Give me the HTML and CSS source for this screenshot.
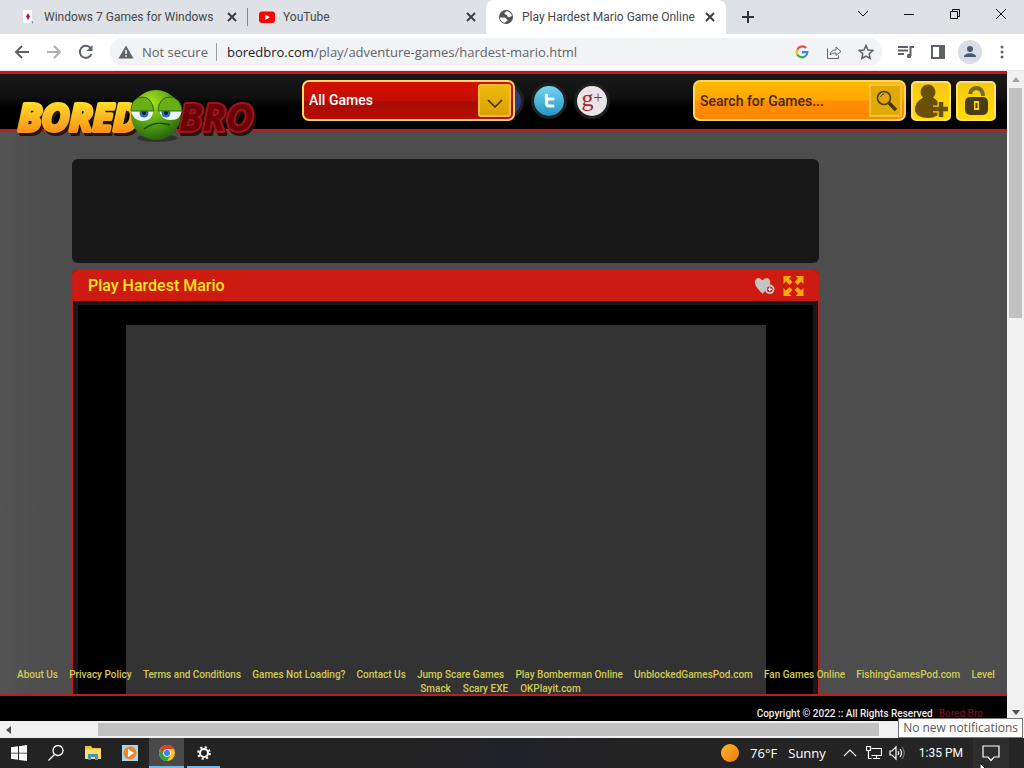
FILE: index.html
```html
<!DOCTYPE html>
<html lang="en">
<head>
<meta charset="utf-8">
<title>Play Hardest Mario Game Online</title>
<link rel="stylesheet" href="styles.css">
</head>
<body>
<div class="tabs">
  <div class="tab tab-first">
    <svg class="fav" viewBox="0 0 16 16"><rect x="3" y="1" width="9" height="13" rx="1" fill="#fff"/><path d="M8 4l2 3.500-2 3.500-2-3.500z" fill="#c8102e"/><path d="M11 13l2-1v3z" fill="#889"/></svg>
    <span class="tab-title">Windows 7 Games for Windows</span>
    <button class="close" aria-label="Close tab"><svg viewBox="0 0 10 10"><path d="M1 1l8 8M9 1l-8 8"/></svg></button>
  </div>
  <div class="tab tab-second">
    <svg class="fav" viewBox="0 0 16 16"><rect y="2.500" width="16" height="11.500" rx="3" fill="#f00"/><path d="M6.300 5.500v5.500l4.700-2.750z" fill="#fff"/></svg>
    <span class="tab-title">YouTube</span>
    <button class="close" aria-label="Close tab"><svg viewBox="0 0 10 10"><path d="M1 1l8 8M9 1l-8 8"/></svg></button>
  </div>
  <div class="tab active">
    <svg class="fav" viewBox="0 0 16 16"><circle cx="8" cy="8" r="7" fill="#505357"/><path d="M2 8.500h4.500c1.500 0 1.500 2 3 2v1.300c-1.500 0-1.500 2-3.500 2C3.500 13 2 11 2 8.500zM8.500 2.200c-1 1-2 1-2 2.300 0 1.500 1.800.8 2.500 1.800s.5 2 2 2 1.500-1.300 3-1.300C13.500 4.500 11.500 2.300 8.500 2.200z" fill="#fff"/></svg>
    <span class="tab-title">Play Hardest Mario Game Online</span>
    <button class="close" aria-label="Close tab"><svg viewBox="0 0 10 10"><path d="M1 1l8 8M9 1l-8 8"/></svg></button>
  </div>
  <button class="new-tab" aria-label="New tab"><svg viewBox="0 0 14 14"><path d="M7 1v12M1 7h12"/></svg></button>
  <div class="window-buttons">
    <button aria-label="Search tabs"><svg viewBox="0 0 12 12"><path d="M1 3l5 5 5-5"/></svg></button>
    <button aria-label="Minimize"><svg viewBox="0 0 12 12"><path d="M1 6.500h10"/></svg></button>
    <button aria-label="Restore"><svg viewBox="0 0 12 12"><path d="M1.500 3.500h7v7h-7zM3.500 3.500v-2h7v7h-2"/></svg></button>
    <button aria-label="Close"><svg viewBox="0 0 12 12"><path d="M1 1l10 10M11 1L1 11"/></svg></button>
  </div>
</div>

<div class="toolbar">
  <div class="nav">
    <button aria-label="Back"><svg viewBox="0 0 16 16"><path d="M15 8H2M8 2L2 8l6 6"/></svg></button>
    <button class="dim" aria-label="Forward"><svg viewBox="0 0 16 16"><path d="M1 8h13M8 2l6 6-6 6"/></svg></button>
    <button aria-label="Reload"><svg viewBox="0 0 16 16"><path d="M13.500 10A6 6 0 1 1 12.500 4"/><path d="M14.500 1v6h-6z" fill="#5f6368" stroke="none"/></svg></button>
  </div>
  <div class="address">
    <svg class="warn" viewBox="0 0 16 16"><path d="M8 1.500l7.500 13H.5z" fill="#5f6368"/><path d="M8 6v4M8 11.200v1.600" stroke="#fff" stroke-width="1.500"/></svg>
    <span class="secure">Not secure</span>
    <span class="url"><b>boredbro.com</b>/play/adventure-games/hardest-mario.html</span>
    <button aria-label="Google"><svg class="google" viewBox="0 0 16 16" fill="none"><path d="M12 4A5.300 5.300 0 0 0 3.300 5.600" stroke="#ea4335"/><path d="M3.300 5.600a5.300 5.300 0 0 0 0 4.800" stroke="#fbbc05"/><path d="M3.300 10.400a5.300 5.300 0 0 0 8.200 1.600" stroke="#34a853"/><path d="M11.500 12a5.300 5.300 0 0 0 1.800-3.800H8" stroke="#4285f4"/></svg></button>
    <button aria-label="Share"><svg viewBox="0 0 16 16"><path class="thin" d="M1.500 4.500v10h11v-3M4 11c.5-3.500 2.500-5 6-5V3l5 4.500-5 4V9c-3 0-4.500.5-6 2z"/></svg></button>
    <button aria-label="Bookmark"><svg viewBox="0 0 16 16"><path class="star" d="M8 1.500l2 4.500 4.800.5-3.600 3.200 1 4.800L8 12l-4.200 2.500 1-4.800L1.200 6.500 6 6z"/></svg></button>
  </div>
  <div class="tools">
    <button aria-label="Media"><svg viewBox="0 0 16 16"><path d="M0 3h10M0 6.500h10M0 10h6M12.500 12V3H16"/><circle cx="11" cy="12" r="2.200" fill="#5f6368" stroke="none"/></svg></button>
    <button aria-label="Side panel"><svg viewBox="0 0 16 16"><path d="M2 2h12v12H2z"/><path d="M10 2h4v12h-4z" fill="#5f6368"/></svg></button>
    <button class="profile" aria-label="Profile"><svg viewBox="0 0 16 16"><g fill="#4b5870" stroke="none"><circle cx="8" cy="5" r="3"/><path d="M2 13c0-5 12-5 12 0z"/></g></svg></button>
    <button aria-label="Menu"><svg viewBox="0 0 16 16"><g fill="#5f6368" stroke="none"><circle cx="8" cy="3" r="1.500"/><circle cx="8" cy="8" r="1.500"/><circle cx="8" cy="13" r="1.500"/></g></svg></button>
  </div>
</div>

<div class="view">
  <div class="page">
    <header class="site-header">
      <a class="logo" href="#" aria-label="Bored Bro">
        <svg viewBox="0 0 244 60">
          <defs>
            <linearGradient id="gold" x2="0" y2="1"><stop offset=".2" stop-color="#ffe32a"/><stop offset=".85" stop-color="#fb8d16"/></linearGradient>
            <radialGradient id="green" cx=".4" cy=".25" r=".8"><stop stop-color="#a9e51b"/><stop offset=".5" stop-color="#5ca716"/><stop offset="1" stop-color="#205f0b"/></radialGradient>
          </defs>
          <g class="logo-text">
            <text class="bored" x="4" y="45">BORED</text><text class="bro" x="165" y="45">BRO</text>
          </g>
          <ellipse cx="143" cy="52" rx="20" ry="4" fill="#222" opacity=".6"/>
          <circle cx="142" cy="29" r="25" fill="url(#green)"/>
          <path d="M117 24h22q0 11-11 11-10-1-11-11z" fill="#eef7fb"/><path d="M145 24h23q-1 10-11 10-10 0-12-10z" fill="#eef7fb"/>
          <circle cx="130" cy="27" r="4.500" fill="#2873b4"/><circle cx="152" cy="27" r="4.500" fill="#2873b4"/>
          <circle cx="130" cy="27" r="2" fill="#071b30"/><circle cx="152" cy="27" r="2" fill="#071b30"/>
          <path d="M117 25q0-13 11-14 10 0 12 14zM144 25q1-14 12-14 11 1 12 14z" fill="#6bad16" stroke="#2c6c0c"/>
          <path d="M130 43q12-9 26-4" fill="none" stroke="#1e4a08" stroke-width="1.500"/>
        </svg>
      </a>
      <div class="category">
        <select aria-label="Category"><option>All Games</option></select>
        <span class="arrow"><svg viewBox="0 0 16 10"><path d="M1 1l7 7 7-7"/></svg></span>
      </div>
      <div class="social">
        <a class="facebook" href="#" aria-label="Facebook"></a>
        <a class="twitter" href="#" aria-label="Twitter"><svg viewBox="0 0 16 16"><path d="M5.500 2v8q0 3 3 3H12M5.500 6H12" fill="none" stroke="#fff" stroke-width="3.200" stroke-linecap="round"/></svg></a>
        <a class="gplus" href="#" aria-label="Google Plus">g<sup>+</sup></a>
      </div>
      <form class="search">
        <input type="text" value="Search for Games..." aria-label="Search for games">
        <button type="button" aria-label="Search"><svg viewBox="0 0 24 24"><circle cx="10" cy="9" r="6.500" fill="none" stroke="#493708" stroke-width="1.600"/><path d="M6.500 8q1-3 4-3" stroke="#493708" fill="none"/><path d="M15 14l7 7" stroke="#493708" stroke-width="3.500"/></svg></button>
      </form>
      <button class="square" aria-label="Register"><svg viewBox="0 0 36 36"><g fill="#6a5006"><circle cx="15" cy="9" r="7.500"/><path d="M11 14h8q9 4 8 13-1 8-12 8T2 28q-1-9 9-14z"/></g><path d="M28 18v17M20 26h16" stroke="#fbd40a" stroke-width="7"/><path d="M28 19v15M20 26h15" stroke="#6a5006" stroke-width="4.500"/></svg></button>
      <button class="square" aria-label="Log in"><svg viewBox="0 0 36 36"><path d="M12 11q1-6 7-6 6 1 6 8" fill="none" stroke="#756a25" stroke-width="4"/><rect x="7" y="14" width="23" height="18" rx="5" fill="#4a3c1a"/><path d="M18.500 18v9" stroke="#fbd40a" stroke-width="5"/><path d="M18.500 20v5" stroke="#4a3c1a" stroke-width="2"/></svg></button>
    </header>
    <main>
      <div class="ad"></div>
      <section class="game">
        <div class="game-head">
          <h1>Play Hardest Mario</h1>
          <button aria-label="Add to favourites"><svg viewBox="0 0 22 20"><path d="M9 18Q0 10 1 5q2-6 8-1 6-5 8 1 1 5-8 13z" fill="#c5c2c2"/><circle cx="16.500" cy="13.500" r="4" fill="#b3292b" stroke="#c5c2c2" stroke-width="2"/><path d="M16.500 11.500v4M14.500 13.500h4" stroke="#fff" stroke-width="1.500"/></svg></button>
          <button aria-label="Full screen"><svg viewBox="0 0 20 20"><path d="M0 0h8L5.500 2.500l3.500 3.500L6 9 2.500 5.500 0 8zM20 0v8l-2.500-2.500L14 9l-3-3 3.500-3.500L12 0zM0 20v-8l2.500 2.500L6 11l3 3-3.500 3.500L8 20zM20 20h-8l2.500-2.500L11 14l3-3 3.500 3.500L20 12z" fill="#fba80e"/></svg></button>
        </div>
        <div class="game-body"><div class="game-frame"></div></div>
      </section>
    </main>
    <footer>
      <nav class="links">
        <div><a href="#">About Us</a><a href="#">Privacy Policy</a><a href="#">Terms and Conditions</a><a href="#">Games Not Loading?</a><a href="#">Contact Us</a><a href="#">Jump Scare Games</a><a href="#">Play Bomberman Online</a><a href="#">UnblockedGamesPod.com</a><a href="#">Fan Games Online</a><a href="#">FishingGamesPod.com</a><a href="#">Level</a></div>
        <div class="second"><a href="#">Smack</a><a href="#">Scary EXE</a><a href="#">OKPlayit.com</a></div>
      </nav>
      <div class="copyright"><span>Copyright © 2022 :: All Rights Reserved</span><a href="#">Bored Bro</a></div>
    </footer>
  </div>
  <div class="vscroll">
    <svg viewBox="0 0 8 5"><path d="M4 0l4 5H0z" fill="#a3a3a3"/></svg>
    <div class="vthumb"></div>
    <svg viewBox="0 0 8 5"><path d="M4 5l4-5H0z" fill="#505050"/></svg>
  </div>
</div>
<div class="hscroll">
  <svg viewBox="0 0 5 8"><path d="M0 4l5-4v8z" fill="#505050"/></svg>
  <div class="hthumb"></div>
</div>

<div class="taskbar">
  <button aria-label="Start"><svg viewBox="0 0 16 16"><path d="M0 2.300l7-1v6.400H0zM8 1.200L16 0v7.700H8zM0 8.500h7v6.300l-7-1zM8 8.500h8V16l-8-1.100z" fill="#fff"/></svg></button>
  <button aria-label="Search"><svg viewBox="0 0 16 16" fill="none" stroke="#fff" stroke-width="1.300"><circle cx="10" cy="5.500" r="5"/><path d="M6.500 9.500L.5 15.500"/></svg></button>
  <button aria-label="File Explorer"><svg viewBox="0 0 16 16"><path d="M0 1h6l1.500 2H16v11H0z" fill="#efc042"/><path d="M0 4.500h16V14H0z" fill="#fbdc73"/><path d="M3 15V9h10v6h-3v-3H6v3z" fill="#4492c4"/></svg></button>
  <button aria-label="Media Player"><svg viewBox="0 0 16 16"><path d="M0 0h16v16H0z" fill="#a8d5ee"/><circle cx="8" cy="8" r="6.500" fill="#f08422"/><path d="M6 4l6 4-6 4z" fill="#fff"/></svg></button>
  <button class="running current" aria-label="Chrome"><svg viewBox="0 0 16 16"><circle cx="8" cy="8" r="8" fill="#f7c71e"/><path d="M1.100 4A8 8 0 0 1 15 4H8v4L4.500 10z" fill="#e33b2e"/><path d="M1.100 4A8 8 0 0 0 8 16l3.500-6L8 12 4.500 10z" fill="#2da14c"/><circle cx="8" cy="8" r="3.800" fill="#fff"/><circle cx="8" cy="8" r="3" fill="#3f7fe8"/></svg></button>
  <button class="running" aria-label="Settings"><svg viewBox="0 0 16 16" fill="none" stroke="#fff"><circle cx="8" cy="8" r="4" stroke-width="2"/><circle cx="8" cy="8" r="5.800" stroke-width="2" stroke-dasharray="2.200 2.355"/></svg></button>
  <div class="tray">
    <span class="sun"></span><span class="weather">76°F</span><span class="weather">Sunny</span>
    <svg class="chevron" viewBox="0 0 14 14"><path d="M1 10l6-6 6 6"/></svg>
    <svg viewBox="0 0 16 16"><path d="M5.500 3.500h10v7h-10M10.500 10.500v3M7 13.500h7M.5 1.500h4v4h-4zM2.500 5.500v8h3"/></svg>
    <svg class="sound" viewBox="0 0 16 16"><path d="M1 6h2l4-4v12l-4-4H1zM9 6q1.500 2 0 4M11 4q3 4 0 8"/><path d="M13 2q4.500 6 0 12" stroke="#777"/></svg>
    <span class="clock">1:35 PM</span>
    <button class="notify" aria-label="Notifications"><svg viewBox="0 0 18 18"><path d="M1 2h16v11h-5l-3 3.500L6 13H1z"/></svg></button>
  </div>
</div>
<div class="tooltip">No new notifications</div>
<svg class="cursor" viewBox="0 0 8 12"><path d="M0 0v11l3-3h5z" fill="#fff" stroke="#000"/></svg>
</body>
</html>
```
FILE: styles.css
```css
* { box-sizing: border-box; }
body { margin: 0; height: 100vh; display: flex; flex-direction: column; position: relative; overflow: hidden; font-family: "Open Sans", "Noto Sans", sans-serif; font-size: 12px; color: #45484c; background: #222; }
button { border: 0; padding: 0; background: none; display: flex; align-items: center; justify-content: center; font: inherit; color: inherit; }
a { text-decoration: none; }
svg { display: block; flex: none; }

.tabs { flex: none; height: 34px; display: flex; background: #dee1e6; font-family: Roboto, sans-serif; }
.tab { flex: 0 1 240px; min-width: 0; display: flex; align-items: center; gap: 8px; padding: 0 9px 0 11px; }
.tab-first { flex-basis: 247px; padding: 0 8px 0 20px; }
.tab-second { flex-basis: 239px; padding: 0 8px 0 12px; background: linear-gradient(#85888c, #85888c) left center / 1px 18px no-repeat; }
.tab.active { background: #fff; border-radius: 8px 8px 0 0; padding-left: 12px; }
.tab-title { flex: 1; white-space: nowrap; overflow: hidden; }
.fav { width: 16px; height: 16px; }
.close svg { width: 10px; height: 10px; stroke: #3c4043; stroke-width: 2; }
.close { width: 14px; height: 14px; }
.new-tab { width: 44px; }
.new-tab svg { width: 14px; height: 14px; stroke: #303336; stroke-width: 2; }
.window-buttons { margin-left: auto; display: flex; }
.window-buttons button { width: 46px; height: 28px; }
.window-buttons svg { width: 12px; height: 12px; fill: none; stroke: #111; }

.toolbar { flex: none; height: 37px; display: flex; align-items: center; gap: 8px; padding: 0 6px; background: #fff; border-bottom: 1px solid #e8e2dc; }
.toolbar svg { width: 16px; height: 16px; fill: none; stroke: #5f6368; stroke-width: 2; }
.toolbar button { width: 32px; height: 28px; }
.toolbar .dim { opacity: .5; }
.toolbar .thin { stroke-width: 1; }
.toolbar .star { stroke-width: 1.500; }
.nav { display: flex; }
.address { flex: 1; min-width: 0; height: 28px; display: flex; align-items: center; background: #f1f3f4; border-radius: 14px; padding: 0 0 0 8px; font-size: 13px; }
.address .warn { stroke: none; }
.address .google { stroke-width: 2.200; }
.secure { margin-left: 8px; padding-right: 8px; border-right: 1px solid #9a9da1; color: #5f6368; white-space: nowrap; }
.url { flex: 1; margin-left: 10px; color: #5f6368; white-space: nowrap; overflow: hidden; }
.url b { font-weight: 400; color: #202124; }
.tools { display: flex; }
.tools .profile { width: 24px; height: 24px; border-radius: 50%; background: #d9dee6; margin: 2px 4px; }

.view { flex: 1; min-height: 0; display: flex; background: #f1f1f1; }
.page { flex: 1; min-width: 0; position: relative; overflow: hidden; display: flex; flex-direction: column; background: #4d4d4d; font-family: Roboto, sans-serif; font-weight: 500; }
.site-header { flex: none; height: 61px; display: flex; align-items: center; padding: 0 11px 2px 14px; background: linear-gradient(#191919, #111 40%, #000 60%); border-top: 3px solid #c51b16; border-bottom: 3px solid #c51b16; position: relative; z-index: 1; }
.logo { height: 41px; width: 244px; margin-right: 44px; }
.logo svg { width: 244px; height: 60px; margin-top: 6px; overflow: visible; }
.logo-text { font: italic 700 38px "Open Sans", sans-serif; paint-order: stroke; stroke-width: 4px; stroke-linejoin: round; filter: drop-shadow(2px 3px 0 #22150c); }
.bored { fill: url(#gold); stroke: url(#gold); }
.bro { fill: #680409; stroke: #a90f1b; }
.category { flex: none; width: 213px; height: 41px; display: flex; border: 2px solid #ffd66b; border-radius: 7px; background: linear-gradient(#d31004, #c50d03 50%, #a50c04 55%, #b90d04); padding: 2px; z-index: 1; }
.category select { flex: 1; min-width: 0; appearance: none; border: 0; background: none; color: #fff; font: inherit; font-size: 14px; padding: 0 3px 2px; }
.arrow { width: 33px; height: 33px; border: 2px solid #f7b93a; border-radius: 3px; background: linear-gradient(#eeba09, #dba004); display: flex; align-items: center; justify-content: center; padding-top: 6px; }
.arrow svg { width: 16px; height: 10px; fill: none; stroke: #412604; stroke-width: 1.500; }
.social { display: flex; gap: 13px; margin-left: -24px; }
.social a { width: 30px; height: 30px; border-radius: 50%; box-shadow: 0 0 0 3px #202020; display: flex; align-items: center; justify-content: center; }
.facebook { background: #273b78; }
.twitter { background: linear-gradient(#75d5ef, #2496c4); }
.twitter svg { width: 16px; height: 16px; }
.social .gplus { background: #e7e5e5; color: #a42334; font: 24px/20px "Liberation Serif", serif; padding-bottom: 5px; }
.gplus sup { font-size: 16px; line-height: 10px; }
.search { flex: none; width: 213px; height: 41px; margin: 0 5px 0 auto; display: flex; align-items: center; border: 2px solid #ffd75a; border-radius: 7px; background: linear-gradient(#ffb800, #ffa800 48%, #ff8e00 52%, #ff8500); padding: 0 2px 0 5px; }
.search input { flex: 1; min-width: 0; border: 0; background: none; font: inherit; font-size: 14px; color: #482409; padding: 0; }
.search button { width: 33px; height: 33px; border: 2px solid #f6c438; background: #e3a903; }
.search svg { width: 24px; height: 24px; }
.square { flex: none; width: 40px; height: 40px; border: 2px solid #ffe16a; border-radius: 5px; background: linear-gradient(#f6c817, #ffdc00); margin-right: 5px; }
.square:last-child { margin-right: 0; }
.square svg { width: 36px; height: 36px; }

main { flex: 1; min-height: 0; display: flex; flex-direction: column; gap: 6px; padding: 27px 188px 0 72px; background: linear-gradient(90deg, #545454, #4d4d4d 40px); }
.ad { flex: none; height: 104px; border-radius: 6px; background: #171717; }
.game { flex: 1; min-height: 0; display: flex; flex-direction: column; border: 1px solid #c51b16; border-bottom: 0; border-radius: 6px 6px 0 0; background: #171717; overflow: hidden; }
.game-head { flex: none; height: 31px; display: flex; align-items: center; gap: 8px; padding: 0 14px 0 15px; background: #cd1b12; }
.game-head h1 { flex: 1; margin: 0; font: inherit; font-size: 16px; color: #ffe51a; }
.game-head svg { width: 21px; height: 20px; }
.game-body { flex: 1; min-height: 0; margin: 4px 5px 0; padding: 20px 47px 0 48px; background: #000; }
.game-frame { height: 100%; background: #333; }

footer { position: absolute; left: 0; right: 0; bottom: 0; display: flex; flex-direction: column; }
.links { margin-bottom: -2px; font-size: 10px; line-height: 14px; position: relative; z-index: 1; }
.links div { display: flex; justify-content: space-between; padding: 0 12px 0 17px; white-space: nowrap; }
.links .second { justify-content: center; gap: 12px; padding-right: 23px; }
.links a { color: #d3cb55; }
.copyright { height: 27px; display: flex; justify-content: flex-end; align-items: center; gap: 6px; padding: 10px 24px 0 0; border-top: 2px solid #b52219; background: #000; font-size: 10px; line-height: 14px; color: #eee; }
.copyright a { color: #6f0f1b; }

.vscroll { flex: none; width: 17px; display: flex; flex-direction: column; align-items: center; padding: 6px 2px 6px; background: #f1f1f1; }
.vscroll svg { width: 8px; height: 5px; }
.vthumb { width: 13px; height: 36%; margin: 6px 0 auto; background: #c1c1c1; }
.hscroll { flex: none; height: 17px; display: flex; align-items: center; padding-left: 6px; background: #f1f1f1; }
.hscroll svg { width: 5px; height: 8px; }
.hthumb { flex: 1; height: 13px; margin: 0 145px 0 87px; background: #c1c1c1; }

.taskbar { flex: none; height: 30px; display: flex; background: linear-gradient(90deg, #232323 40%, #20202a 50%, #232323 60%, #252525); color: #fff; }
.taskbar > button { width: 37px; }
.taskbar > button svg { width: 16px; height: 16px; }
.taskbar .running { box-shadow: inset 0 -2px #76b9ed; width: 33px; margin: 0 2px; }
.taskbar .current { background: #4a4a4a; width: 35px; margin: 0 1px; }
.tray { margin-left: auto; display: flex; align-items: center; }
.tray svg { width: 16px; height: 16px; fill: none; stroke: #fff; stroke-width: 1.200; }
.sun { width: 18px; height: 18px; border-radius: 50%; background: linear-gradient(135deg, #fdb52c, #ef7b0b); }
.weather { font-size: 13px; margin-left: 11px; }
.tray .chevron { width: 14px; height: 14px; margin: 0 9px 0 17px; }
.tray .sound { margin: 0 14px 0 7px; }
.clock { font: 12px Roboto, sans-serif; white-space: nowrap; }
.notify { width: 36px; height: 30px; margin: 0 15px 0 10px; background: #2d2d2d; }
.notify svg { width: 18px; height: 18px; }
.tooltip { position: absolute; right: 1px; bottom: 30px; border: 1px solid #777; background: #fff; color: #575757; padding: 0 4px; line-height: 18px; font-size: 12px; z-index: 2; }
.cursor { position: absolute; right: 36px; bottom: -7px; width: 8px; height: 12px; }
```
